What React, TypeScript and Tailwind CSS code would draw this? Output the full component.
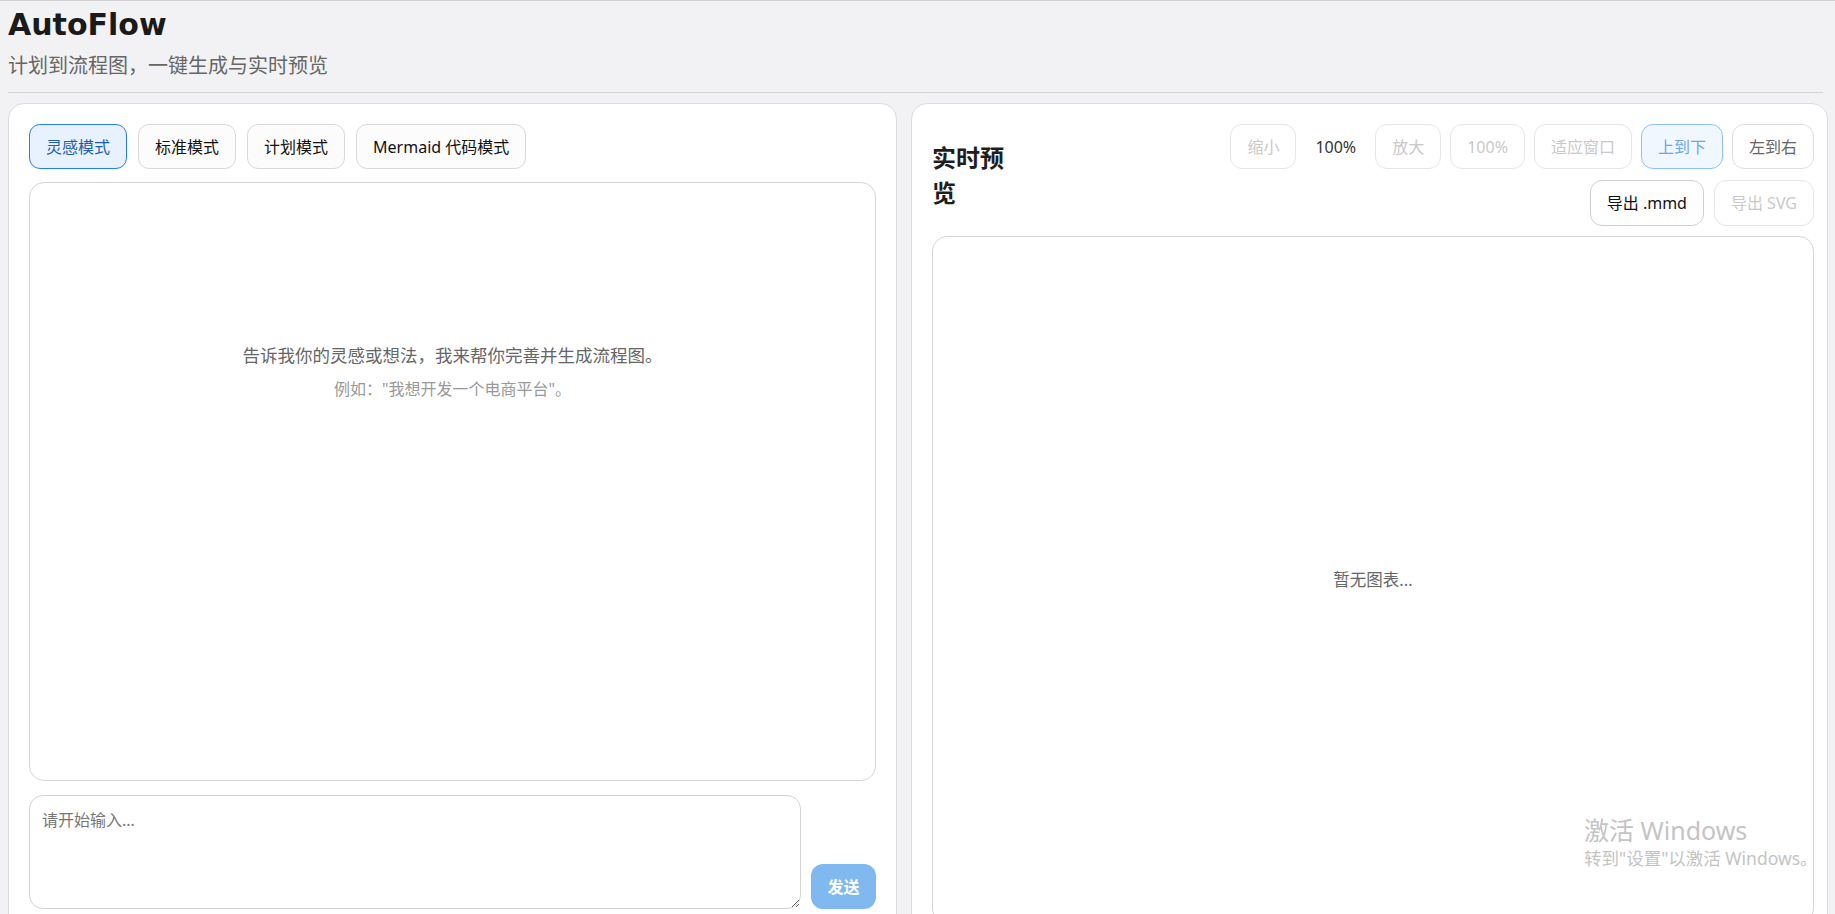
import React, {useState} from 'react';

const modes = ['灵感模式', '标准模式', '计划模式', 'Mermaid 代码模式'];

// toolbar button look, picked by state
const toolBtn = {
  disabled: 'h-[45px] px-4 rounded-[12px] border border-[#e6e6e6] bg-white text-[#c9c9c9]',
  active: 'h-[45px] px-4 rounded-[12px] border border-[#8fc1f3] bg-[#f0f7ff] text-[#6ea8e4]',
  muted: 'h-[45px] px-4 rounded-[12px] border border-[#dedede] bg-white text-[#666]',
  normal: 'h-[45px] px-4 rounded-[12px] border border-[#cfcfcf] bg-white text-[#111]',
};

const App = () => {
  const [mode, setMode] = useState('灵感模式');
  const [input, setInput] = useState('');

  return (
    <div className="relative h-screen overflow-hidden border-t border-[#d0d0d0] bg-[#f2f2f4] px-2 font-['Noto_Sans','Noto_Sans_CJK_SC',sans-serif] text-[16px] text-[#222]">
      {/* Header */}
      <header className="mr-1 border-b border-[#d3d3d3] pb-[12px]">
        <h1 className="pt-[6px] font-['DejaVu_Sans',sans-serif] text-[30px] font-bold leading-[36px] text-[#1a1a1a]">
          AutoFlow
        </h1>
        <p className="mt-[9px] text-[20px] leading-[28px] text-[#666]">
          计划到流程图，一键生成与实时预览
        </p>
      </header>

      <main className="-mr-px mt-[10px] grid grid-cols-[889px_1fr] gap-[14px]">
        {/* Left: chat */}
        <section className="rounded-2xl border border-[#dcdcdc] bg-white p-5">
          <div className="flex gap-[11px]">
            {modes.map(m => (
              <button
                key={m}
                onClick={() => setMode(m)}
                className={
                  m === mode
                    ? 'h-[45px] px-4 rounded-[11px] border border-[#2b7fe0] bg-[#e8f2fe] text-[#1d5fae]'
                    : 'h-[45px] px-4 rounded-[11px] border border-[#d9d9d9] bg-[#fcfcfc] text-[#111]'
                }
              >
                {m}
              </button>
            ))}
          </div>

          <div className="mt-[13px] h-[599px] rounded-[15px] border border-[#d6d6d6] bg-white pt-[159px] text-center">
            <p className="text-[17.5px] leading-[26px] text-[#666]">
              告诉我你的灵感或想法，我来帮你完善并生成流程图。
            </p>
            <p className="mt-[10px] text-[16px] leading-[22px] text-[#999]">
              例如："我想开发一个电商平台"。
            </p>
          </div>

          <div className="mt-[14px] flex items-end gap-[10px]">
            <textarea
              value={input}
              onChange={e => setInput(e.target.value)}
              placeholder="请开始输入..."
              className="h-[114px] flex-1 rounded-[14px] border border-[#d3d3d3] bg-white p-3 text-[16px] leading-[24px] outline-none placeholder:text-[#777]"
            />
            <button className="h-[45px] w-[65px] rounded-[12px] bg-[#80b8f0] font-bold text-white">
              发送
            </button>
          </div>
        </section>

        {/* Right: preview */}
        <section className="rounded-2xl border border-[#dcdcdc] bg-white pb-5 pl-5 pr-[13px] pt-5">
          <div className="flex items-center justify-between">
            <h2 className="w-[80px] text-[24px] font-bold leading-[35px] text-[#1e1e1e]">
              实时预览
            </h2>
            <div className="flex flex-col items-end gap-[11px]">
              <div className="flex items-center gap-[9px]">
                <button className={toolBtn.disabled}>缩小</button>
                <span className="px-[10px] text-[#333]">100%</span>
                <button className={toolBtn.disabled}>放大</button>
                <button className={toolBtn.disabled}>100%</button>
                <button className={toolBtn.disabled}>适应窗口</button>
                <button className={toolBtn.active}>上到下</button>
                <button className={toolBtn.muted}>左到右</button>
              </div>
              <div className="flex items-center gap-[10px]">
                <button className={toolBtn.normal + ' h-[46px]'}>导出 .mmd</button>
                <button className={toolBtn.disabled + ' h-[46px]'}>导出 SVG</button>
              </div>
            </div>
          </div>

          <div className="mt-[10px] flex h-[688px] items-center justify-center rounded-[15px] border border-[#d6d6d6] bg-white">
            <span className="text-[16.5px] text-[#666]">暂无图表...</span>
          </div>
        </section>
      </main>

      {/* OS activation watermark */}
      <div className="pointer-events-none absolute left-[1584px] top-[814px] text-[#c4c4c4]">
        <div className="text-[25px] leading-[30px]">激活 Windows</div>
        <div className="mt-[2px] text-[17.5px] leading-[22px]">转到"设置"以激活 Windows。</div>
      </div>
    </div>
  );
};

export default App;
